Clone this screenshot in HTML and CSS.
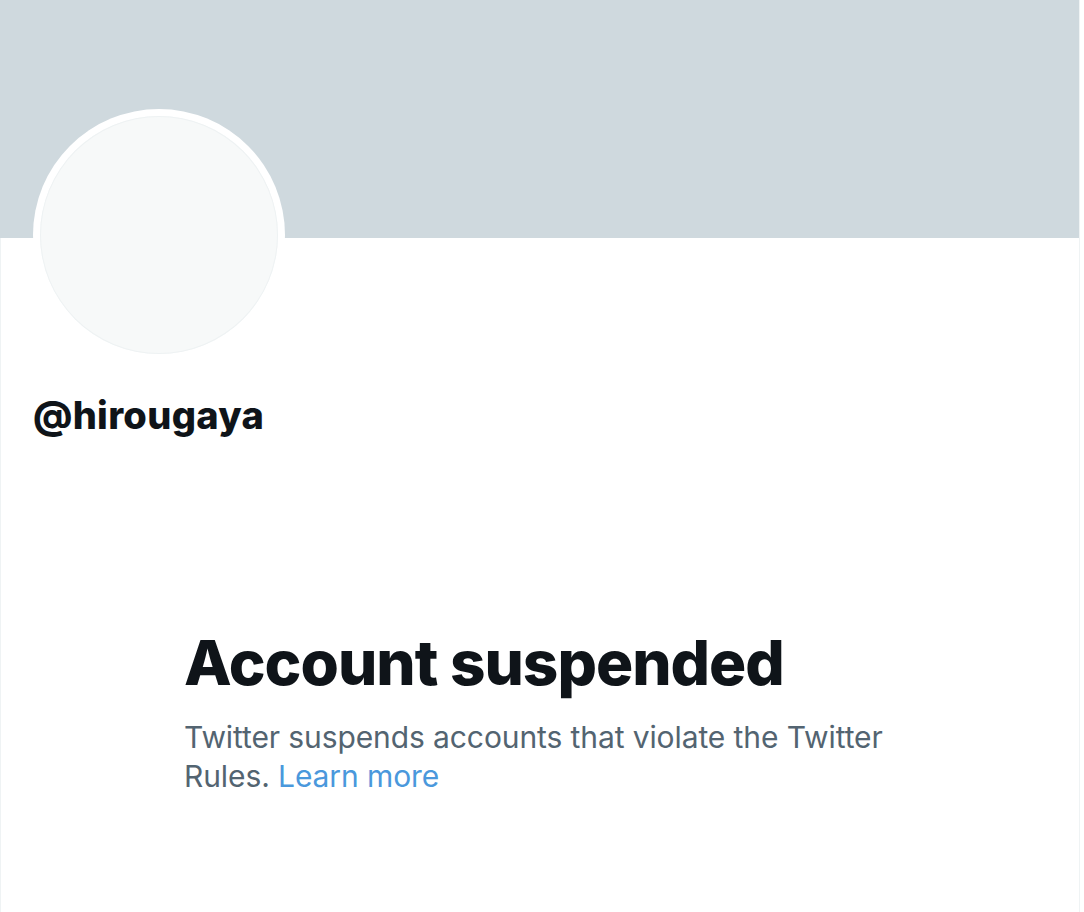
FILE: index.html
```html
<!DOCTYPE html>
<html>
<head>
<meta charset="utf-8">
<link rel="stylesheet" href="styles.css">
</head>
<body>
<main class="page">
  <div class="banner"></div>
  <div class="profile">
    <div class="avatar"><div class="avatar-inner"></div></div>
    <div class="handle">@hirougaya</div>
  </div>
  <section class="notice">
    <h1 class="notice-title">Account suspended</h1>
    <p class="notice-text">Twitter suspends accounts that violate the Twitter Rules. <a class="notice-link" href="#">Learn more</a></p>
  </section>
</main>
</body>
</html>
```
FILE: styles.css
```css
html, body {
  margin: 0;
  padding: 0;
  background: #ffffff;
}
body {
  font-family: Inter, "Liberation Sans", sans-serif;
}
.page {
  width: 1078px;
  min-height: 912px;
  border-left: 1px solid #eff3f4;
  border-right: 1px solid #eff3f4;
  box-sizing: content-box;
}
.banner {
  height: 238px;
  background: #cfd9de;
  margin-left: -1px;
}
.profile {
  padding-left: 32px;
}
.avatar {
  width: 252px;
  height: 252px;
  margin-top: -129px;
  border-radius: 50%;
  background: #ffffff;
  padding: 7px;
  box-sizing: border-box;
}
.avatar-inner {
  width: 100%;
  height: 100%;
  border-radius: 50%;
  background: #f7f9f9;
  box-shadow: inset 0 0 0 1px #eef2f3;
}
.handle {
  margin-top: 32px;
  font-size: 38px;
  font-weight: 800;
  color: #0f1419;
  line-height: 44px;
  letter-spacing: 0.3px;
}
.notice {
  margin-top: 188px;
  padding-left: 183px;
  width: 760px;
}
.notice-title {
  margin: 0;
  font-size: 62px;
  font-weight: 800;
  color: #0f1419;
  line-height: 76px;
  letter-spacing: -1px;
}
.notice-text {
  margin: 17px 0 0;
  font-size: 30px;
  line-height: 39px;
  color: #536471;
  letter-spacing: -0.1px;
}
.notice-link {
  color: #4a98dc;
  text-decoration: none;
}
```
